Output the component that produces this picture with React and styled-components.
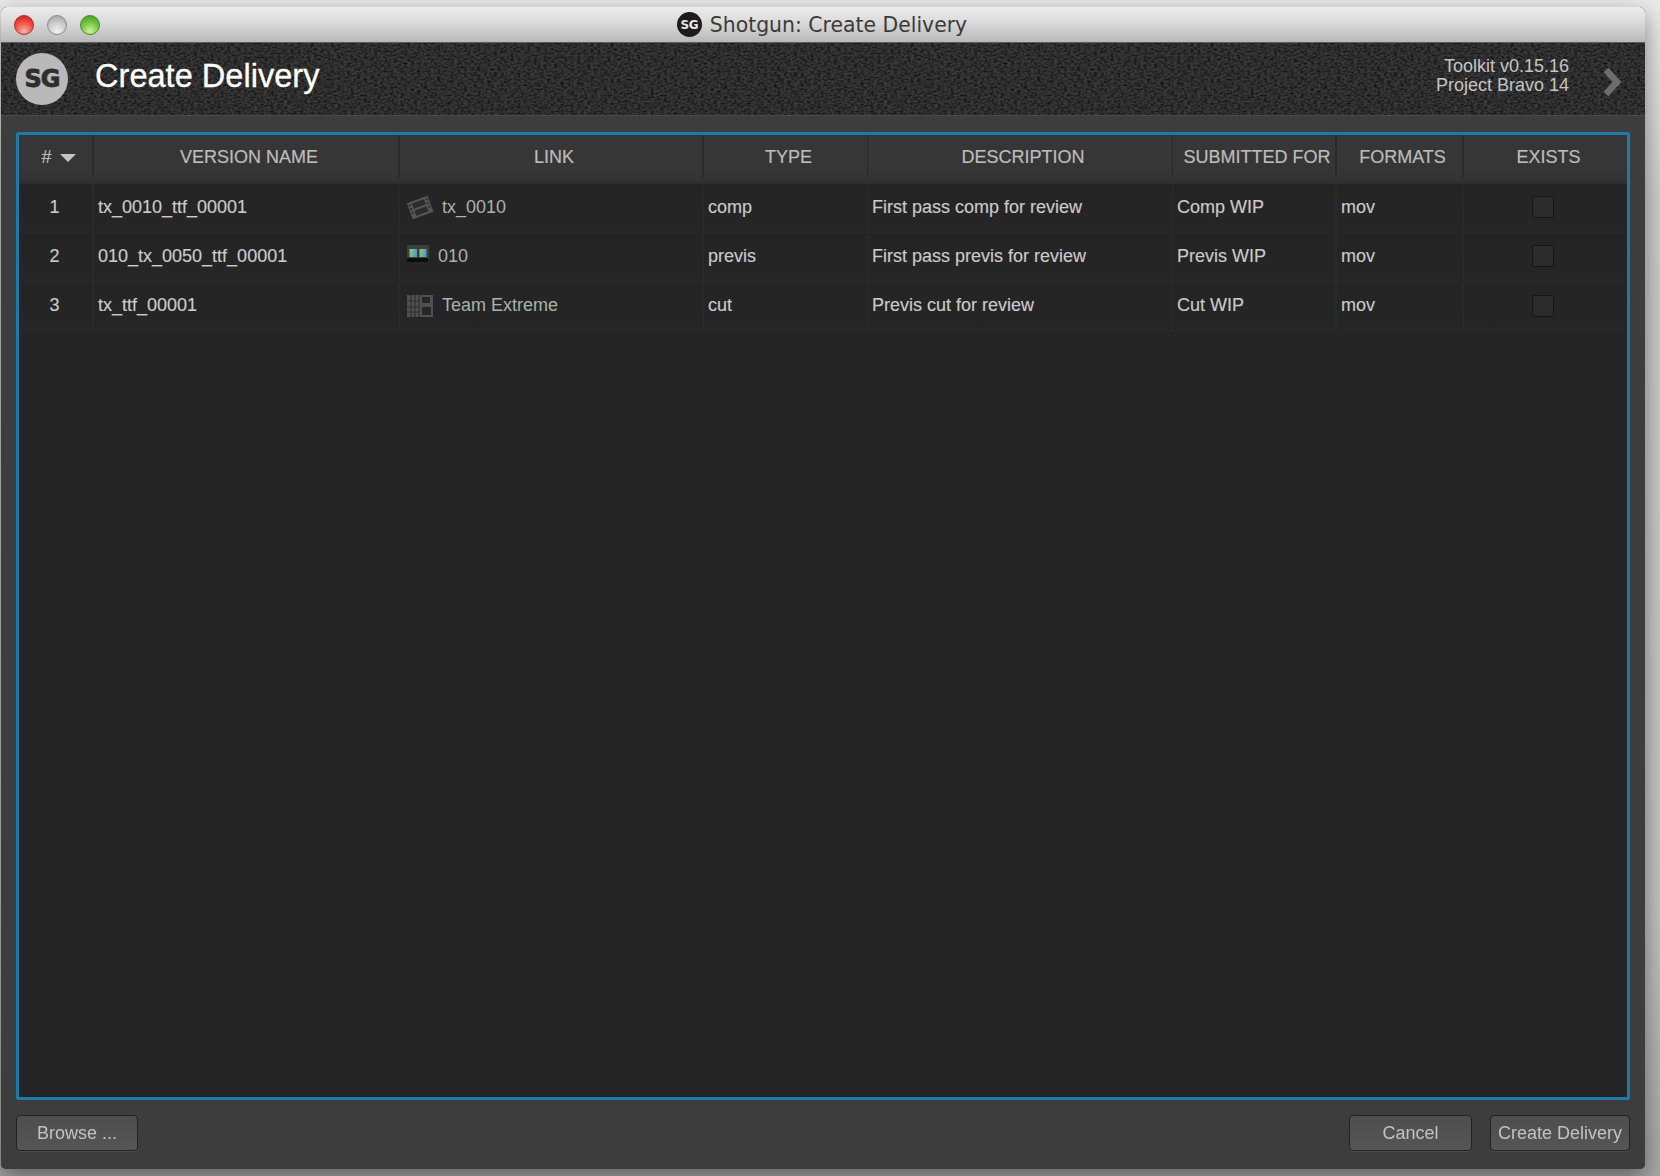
import styled, { createGlobalStyle } from "styled-components";

const columns = "73px 2px 304px 2px 302px 2px 163px 1px 304px 1px 162px 2px 125px 2px 163px";

const leather = `url("data:image/svg+xml,%3Csvg xmlns='http://www.w3.org/2000/svg' width='300' height='300'%3E%3Cfilter id='n' x='0' y='0' width='100%25' height='100%25'%3E%3CfeTurbulence type='fractalNoise' baseFrequency='0.3 0.5' numOctaves='2' seed='4' stitchTiles='stitch'/%3E%3CfeColorMatrix values='0 0 0 0 0 0 0 0 0 0 0 0 0 0 0 1.5 0 0 0 -0.55'/%3E%3C/filter%3E%3Crect width='300' height='300' filter='url(%23n)'/%3E%3C/svg%3E")`;

const rows = [
  { num: "1", name: "tx_0010_ttf_00001", link: "tx_0010", icon: "shot", type: "comp", description: "First pass comp for review", submitted: "Comp WIP", formats: "mov" },
  { num: "2", name: "010_tx_0050_ttf_00001", link: "010", icon: "sequence", type: "previs", description: "First pass previs for review", submitted: "Previs WIP", formats: "mov" },
  { num: "3", name: "tx_ttf_00001", link: "Team Extreme", icon: "project", type: "cut", description: "Previs cut for review", submitted: "Cut WIP", formats: "mov" },
];

const headers = ["VERSION NAME", "LINK", "TYPE", "DESCRIPTION", "SUBMITTED FOR", "FORMATS", "EXISTS"];

const GlobalStyle = createGlobalStyle`
  html, body {
    margin: 0;
    padding: 0;
    background: #9a9a9a;
  }
  body {
    width: 1660px;
    height: 1176px;
    overflow: hidden;
    background: linear-gradient(180deg, #ececec 0px, #e6e6e6 40px, #cfcfcf 200px, #c4c4c4 900px, #a8a8a8 1176px);
    font-family: "Liberation Sans", Arial, sans-serif;
  }
`;

const Page = styled.div`
  width: 1660px;
  height: 1176px;
  box-sizing: border-box;
  padding: 7px 15px 7px 1px;
`;

const Window = styled.div`
  height: 100%;
  display: flex;
  flex-direction: column;
  border-radius: 6px 6px 5px 5px;
  overflow: hidden;
  background: #3d3d3d;
  box-shadow: 0 8px 24px rgba(0, 0, 0, 0.45);
  filter: blur(0.45px);
`;

const TitleBar = styled.div`
  height: 36px;
  flex: none;
  display: grid;
  grid-template-columns: 1fr auto 1fr;
  align-items: center;
  padding: 0 0 0 14px;
  box-sizing: border-box;
  background: linear-gradient(180deg, #ececec 0%, #dcdcdc 40%, #b9b9b9 100%);
  border-bottom: 1px solid #5c5c5c;
`;

const Lights = styled.div`
  display: flex;
  gap: 13px;
  margin-left: -1px;
`;

const Light = styled.span`
  width: 20px;
  height: 20px;
  border-radius: 50%;
  box-sizing: border-box;
  border: 1px solid ${(p) => p.$edge};
  background: radial-gradient(circle at 50% 85%, ${(p) => p.$light} 0%, ${(p) => p.$mid} 55%, ${(p) => p.$dark} 100%);
`;

const WindowTitle = styled.div`
  display: flex;
  align-items: center;
  gap: 8px;
  font-family: "DejaVu Sans", Verdana, sans-serif;
  font-size: 20.4px;
  color: #3c3a38;
  margin-right: 16px;
`;

const TitleLogo = styled.span`
  width: 25px;
  height: 25px;
  border-radius: 50%;
  background: #1c1c1c;
  color: #e8e8e8;
  display: flex;
  align-items: center;
  justify-content: center;
  font-family: "DejaVu Sans", Verdana, sans-serif;
  font-weight: 700;
  font-size: 12px;
  letter-spacing: -0.5px;
`;

const Header = styled.div`
  height: 73px;
  flex: none;
  display: flex;
  align-items: center;
  padding: 0 22px 0 15px;
  box-sizing: border-box;
  border-bottom: 1px solid #4a4a4a;
  background-color: #383838;
  background-image: ${leather};
`;

const Logo = styled.div`
  width: 52px;
  height: 52px;
  border-radius: 50%;
  flex: none;
  background: #b9b9b9;
  color: #2e2e2e;
  display: flex;
  align-items: center;
  justify-content: center;
  font-family: "DejaVu Sans", Verdana, sans-serif;
  font-weight: 700;
  font-size: 24px;
  letter-spacing: -1px;
  -webkit-text-stroke: 0.8px #2e2e2e;
`;

const HeaderTitle = styled.h1`
  margin: -6px 0 0 27px;
  font-size: 32.6px;
  font-weight: 400;
  color: #ffffff;
  flex: 1;
  -webkit-text-stroke: 0.3px #ffffff;
`;

const HeaderInfo = styled.div`
  text-align: right;
  font-size: 18px;
  line-height: 19px;
  color: #c4c4c4;
  margin: -6px 32px 0 0;
`;

const Chevron = styled.svg`
  width: 22px;
  height: 32px;
  flex: none;
  margin-top: 5px;
`;

const Body = styled.div`
  flex: 1;
  min-height: 0;
  display: flex;
  flex-direction: column;
  padding: 16px 15px 18px;
  background: #3d3d3d;
`;

const Panel = styled.div`
  flex: 1;
  min-height: 0;
  border: 3px solid #2079ad;
  border-radius: 2px;
  background: #252525;
  overflow: hidden;
`;

const HeaderRow = styled.div`
  display: grid;
  grid-template-columns: ${columns};
  height: 49px;
  background: #363636;
  box-shadow: inset 0 -10px 6px -6px #2e2e2e;
`;

const HeaderCell = styled.div`
  display: flex;
  align-items: center;
  justify-content: center;
  gap: 8px;
  font-size: 18px;
  color: #bcbcbc;
  white-space: nowrap;
  padding: 0 0 4px 6px;
  -webkit-text-stroke: 0.2px #bcbcbc;
`;

const SortArrow = styled.span`
  width: 0;
  height: 0;
  border-left: 8px solid transparent;
  border-right: 8px solid transparent;
  border-top: 8px solid #c4c4c4;
`;

const HeaderDivider = styled.div`
  background: #2a2a2a;
  margin-bottom: 6px;
`;

const Row = styled.div`
  display: grid;
  grid-template-columns: ${columns};
  height: 49.3px;
  background: linear-gradient(180deg, #242424 0%, #262626 100%);
  border-bottom: 1px solid #292929;
  box-sizing: border-box;
`;

const RowDivider = styled.div`
  background: #2a2a2a;
`;

const Cell = styled.div`
  display: flex;
  align-items: center;
  font-size: 18px;
  color: #cbcbcb;
  white-space: nowrap;
  padding-left: ${(p) => p.$pad ?? 4}px;
  justify-content: ${(p) => (p.$center ? "center" : "flex-start")};
  padding-bottom: 2px;
  -webkit-text-stroke: 0.15px #cbcbcb;
`;

const NumCell = styled(Cell)`
  padding-left: 0;
  padding-right: 2px;
  justify-content: center;
`;

const LinkCell = styled(Cell)`
  color: #aab2aa;
  -webkit-text-stroke: 0;
`;

const LinkText = styled.span`
  margin-left: ${(p) => p.$gap}px;
`;

const LinkIcon = styled.svg`
  flex: none;
  filter: blur(0.7px);
  margin-top: ${(p) => p.$lift ?? 0}px;
`;

const Check = styled.span`
  width: 22px;
  height: 22px;
  box-sizing: border-box;
  border: 1px solid #161616;
  border-radius: 2px;
  background: #2b2b2b;
  margin-right: 5px;
`;

const Footer = styled.div`
  flex: none;
  display: flex;
  align-items: center;
  justify-content: flex-end;
  gap: 18px;
  padding-top: 15px;
`;

const Button = styled.button`
  height: 36px;
  width: ${(p) => p.$width}px;
  padding: 0;
  margin-right: ${(p) => p.$push ?? 0};
  box-sizing: border-box;
  border: 1.5px solid #222222;
  border-radius: 4px;
  background: linear-gradient(180deg, #4e4e4e 0%, #555555 100%);
  font-family: "Liberation Sans", Arial, sans-serif;
  font-size: 18px;
  color: #c2c2c2;
  box-shadow: 0 1px 0 #4c4c4c;
`;

const ShotIcon = () => (
  <LinkIcon width="28" height="28" viewBox="0 0 28 28" fill="none">
    <g transform="rotate(-20 14 14)">
      <rect x="3" y="6" width="22" height="17" fill="#565656" />
      <rect x="7.5" y="8" width="13" height="5.5" fill="#2c2c2c" />
      <rect x="7.5" y="15.5" width="13" height="5.5" fill="#2c2c2c" />
      <path d="M4 8h2v2H4zM4 12h2v2H4zM4 16h2v2H4zM22 8h2v2h-2zM22 12h2v2h-2zM22 16h2v2h-2z" fill="#303030" />
    </g>
  </LinkIcon>
);

const SequenceIcon = () => (
  <LinkIcon width="24" height="22" viewBox="0 0 24 22" fill="none" $lift={-6}>
    <defs>
      <linearGradient id="seqBar" x1="0" y1="0" x2="1" y2="0.3">
        <stop offset="0" stopColor="#9ac95a" />
        <stop offset="0.55" stopColor="#66b6a8" />
        <stop offset="1" stopColor="#5d93c8" />
      </linearGradient>
    </defs>
    <rect x="1" y="3" width="22" height="14" fill="#3e3e3e" />
    <rect x="1" y="16" width="21" height="4" fill="#0d0d0d" />
    <rect x="3.5" y="7" width="7.5" height="8" fill="url(#seqBar)" />
    <rect x="13.5" y="7" width="7" height="8" fill="url(#seqBar)" />
  </LinkIcon>
);

const ProjectIcon = () => (
  <LinkIcon width="28" height="24" viewBox="0 0 28 24" fill="none">
    <rect x="1" y="1" width="26" height="22" fill="#505050" />
    <path d="M5 1v22M9 1v22M13 1v22M1 7h12M1 13h12M1 18h12" stroke="#303030" strokeWidth="1.2" />
    <rect x="16" y="3" width="8" height="6" fill="#262626" />
    <rect x="16" y="13" width="9" height="8" fill="#262626" />
  </LinkIcon>
);

const linkIcons = {
  shot: [<ShotIcon key="shot" />, 8],
  sequence: [<SequenceIcon key="sequence" />, 8],
  project: [<ProjectIcon key="project" />, 8],
};

const App = () => {
  return (
    <Page>
      <GlobalStyle />
      <Window>
        <TitleBar>
          <Lights>
            <Light $edge="#a8322c" $light="#ffb0a5" $mid="#f04a40" $dark="#b8201a" />
            <Light $edge="#8c8c8c" $light="#f2f2f2" $mid="#c8c8c8" $dark="#9a9a9a" />
            <Light $edge="#4e8a2c" $light="#c8f59a" $mid="#70c33e" $dark="#3f9220" />
          </Lights>
          <WindowTitle>
            <TitleLogo>SG</TitleLogo>
            Shotgun: Create Delivery
          </WindowTitle>
          <span />
        </TitleBar>

        <Header>
          <Logo>SG</Logo>
          <HeaderTitle>Create Delivery</HeaderTitle>
          <HeaderInfo>
            Toolkit v0.15.16
            <br />
            Project Bravo 14
          </HeaderInfo>
          <Chevron viewBox="0 0 22 32">
            <path d="M5 4l11 12L5 28" fill="none" stroke="#6d6d6d" strokeWidth="6.5" />
          </Chevron>
        </Header>

        <Body>
          <Panel>
            <HeaderRow>
              <HeaderCell>
                #<SortArrow />
              </HeaderCell>
              {headers.map((label) => [
                <HeaderDivider key={label + "-d"} />,
                <HeaderCell key={label}>{label}</HeaderCell>,
              ])}
            </HeaderRow>
            {rows.map((row) => (
              <Row key={row.num}>
                <NumCell>{row.num}</NumCell>
                <RowDivider />
                <Cell>{row.name}</Cell>
                <RowDivider />
                <LinkCell $pad={6}>
                  {linkIcons[row.icon][0]}
                  <LinkText $gap={linkIcons[row.icon][1]}>{row.link}</LinkText>
                </LinkCell>
                <RowDivider />
                <Cell>{row.type}</Cell>
                <RowDivider />
                <Cell>{row.description}</Cell>
                <RowDivider />
                <Cell>{row.submitted}</Cell>
                <RowDivider />
                <Cell>{row.formats}</Cell>
                <RowDivider />
                <Cell $center $pad={0}>
                  <Check />
                </Cell>
              </Row>
            ))}
          </Panel>
          <Footer>
            <Button $width={122} $push="auto">
              Browse ...
            </Button>
            <Button $width={123}>Cancel</Button>
            <Button $width={140}>Create Delivery</Button>
          </Footer>
        </Body>
      </Window>
    </Page>
  );
};

export default App;
